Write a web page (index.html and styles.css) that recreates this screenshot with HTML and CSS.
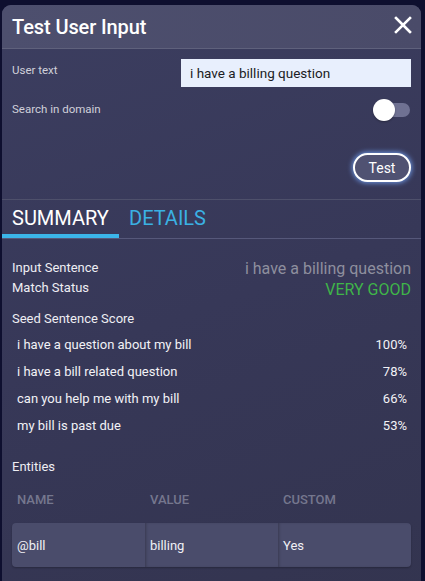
FILE: index.html
```html
<!DOCTYPE html>
<html>
<head>
<meta charset="utf-8">
<link rel="stylesheet" href="styles.css">
</head>
<body>
<div class="panel">
  <div class="header">
    <h1 class="title">Test User Input</h1>
    <svg class="close" width="18" height="18" viewBox="0 0 18 18"><path d="M2 2L16 16M16 2L2 16" stroke="#fff" stroke-width="2.6" stroke-linecap="square"/></svg>
  </div>
  <div class="form">
    <div class="frow">
      <span class="flabel">User text</span>
      <div class="input">i have a billing question</div>
    </div>
    <div class="frow toggle-row">
      <span class="flabel">Search in domain</span>
      <div class="toggle"><span class="track"></span><span class="knob"></span></div>
    </div>
    <div class="btn-row"><button class="test-btn">Test</button></div>
  </div>
  <div class="tabs">
    <div class="tab active">SUMMARY</div>
    <div class="tab">DETAILS</div>
  </div>
  <div class="content">
    <div class="kv">
      <div class="kv-labels">
        <div>Input Sentence</div>
        <div>Match Status</div>
      </div>
      <div class="kv-values">
        <div class="sentence">i have a billing question</div>
        <div class="status">VERY GOOD</div>
      </div>
    </div>
    <div class="section-label">Seed Sentence Score</div>
    <div class="scores">
      <div class="score"><span>i have a question about my bill</span><span>100%</span></div>
      <div class="score"><span>i have a bill related question</span><span>78%</span></div>
      <div class="score"><span>can you help me with my bill</span><span>66%</span></div>
      <div class="score"><span>my bill is past due</span><span>53%</span></div>
    </div>
    <div class="section-label entities">Entities</div>
    <div class="ent-head">
      <span>NAME</span><span>VALUE</span><span>CUSTOM</span>
    </div>
    <div class="ent-row">
      <span>@bill</span><span>billing</span><span>Yes</span>
    </div>
  </div>
</div>
</body>
</html>
```
FILE: styles.css
```css
html, body {
  margin: 0;
  padding: 0;
  background: #0e0f2f;
  font-family: Roboto, "Liberation Sans", sans-serif;
  color: #fff;
  overflow: hidden;
  height: 581px;
}
.panel {
  margin: 5px 4px 0 2px;
  height: 600px;
  border-radius: 9px 9px 0 0;
  background: linear-gradient(160deg, #3c3e60 0%, #373858 50%, #33344f 100%);
  overflow: hidden;
}
.header {
  height: 43px;
  background: linear-gradient(90deg, #4d4f6e, #4a4b69);
  border-bottom: 1px solid #5f617c;
  display: flex;
  align-items: center;
  justify-content: space-between;
  padding: 0 9px 0 10px;
}
.title {
  margin: 0;
  font-size: 20px;
  font-weight: 500;
  letter-spacing: -0.1px;
}
.close { display: block; margin-top: -4px; }
.form {
  padding: 10px 10px 0 10px;
  border-bottom: 1px solid #4e506b;
  height: 151px;
  box-sizing: border-box;
}
.frow {
  display: flex;
  justify-content: space-between;
  align-items: center;
}
.flabel {
  font-size: 11.5px;
  color: #d0d0da;
}
.frow:first-child .flabel { margin-top: -6px; }
.input {
  width: 230px;
  height: 28px;
  box-sizing: border-box;
  background: #e8effd;
  color: #1c1c24;
  font-size: 13.5px;
  padding: 0 9px;
  display: flex;
  align-items: center;
}
.toggle-row { margin-top: 9px; height: 26px; }
.toggle {
  position: relative;
  width: 38px;
  height: 23px;
}
.track {
  position: absolute;
  right: 1px;
  top: 5px;
  width: 32px;
  height: 14px;
  border-radius: 7px;
  background: #6f7192;
}
.knob {
  position: absolute;
  left: 0;
  top: 1px;
  width: 22px;
  height: 22px;
  border-radius: 50%;
  background: #fff;
  box-shadow: 0 1px 2px rgba(0,0,0,0.3);
}
.btn-row {
  display: flex;
  justify-content: flex-end;
  margin-top: 31px;
}
.test-btn {
  width: 58px;
  height: 29px;
  border-radius: 15px;
  border: 2px solid #fff;
  background: #505272;
  color: #fff;
  font-family: Roboto, "Liberation Sans", sans-serif;
  font-size: 14px;
  box-shadow: 0 0 5px 1px rgba(120,170,255,0.8);
  padding: 0;
}
.tabs {
  display: flex;
  border-bottom: 1px solid #56587a;
  height: 39px;
  box-sizing: border-box;
}
.tab {
  font-size: 20px;
  color: #3bb1e3;
  padding: 6px 10px 0 10px;
  box-sizing: border-box;
}
.tab.active {
  color: #fff;
  width: 117px;
  border-bottom: 4px solid #3bb5e9;
}
.content {
  padding: 19px 10px 0 10px;
}
.kv {
  display: flex;
  justify-content: space-between;
}
.kv-labels div {
  font-size: 13px;
  line-height: 20px;
  color: #eeeef3;
}
.kv-values {
  text-align: right;
  margin-top: 1px;
}
.sentence {
  font-size: 16px;
  color: #8e8f9e;
  line-height: 20px;
}
.status {
  font-size: 16px;
  color: #3fb549;
  line-height: 22px;
}
.section-label {
  font-size: 13px;
  color: #eeeef3;
  margin-top: 9px;
  line-height: 17px;
}
.scores { margin-top: 4px; padding: 0 4px 0 5px; }
.score {
  display: flex;
  justify-content: space-between;
  font-size: 13px;
  line-height: 27px;
  color: #f2f2f6;
}
.entities { margin-top: 19px; }
.ent-head {
  display: grid;
  grid-template-columns: 133px 133px 1fr;
  padding: 0 5px;
  font-size: 13px;
  font-weight: 500;
  color: #75778e;
  margin-top: 17px;
  line-height: 16px;
}
.ent-row {
  display: grid;
  grid-template-columns: 133px 133px 1fr;
  margin-top: 15px;
  height: 44px;
  border-radius: 4px;
  background: #4a4c6b;
  overflow: hidden;
  font-size: 13px;
  color: #f0f0f5;
  box-shadow: 0 1px 2px rgba(0,0,0,0.25);
}
.ent-row span {
  display: flex;
  align-items: center;
  padding-left: 5px;
}
.ent-row span + span {
  box-shadow: inset 2px 0 3px -1px rgba(0,0,0,0.25);
}
```
